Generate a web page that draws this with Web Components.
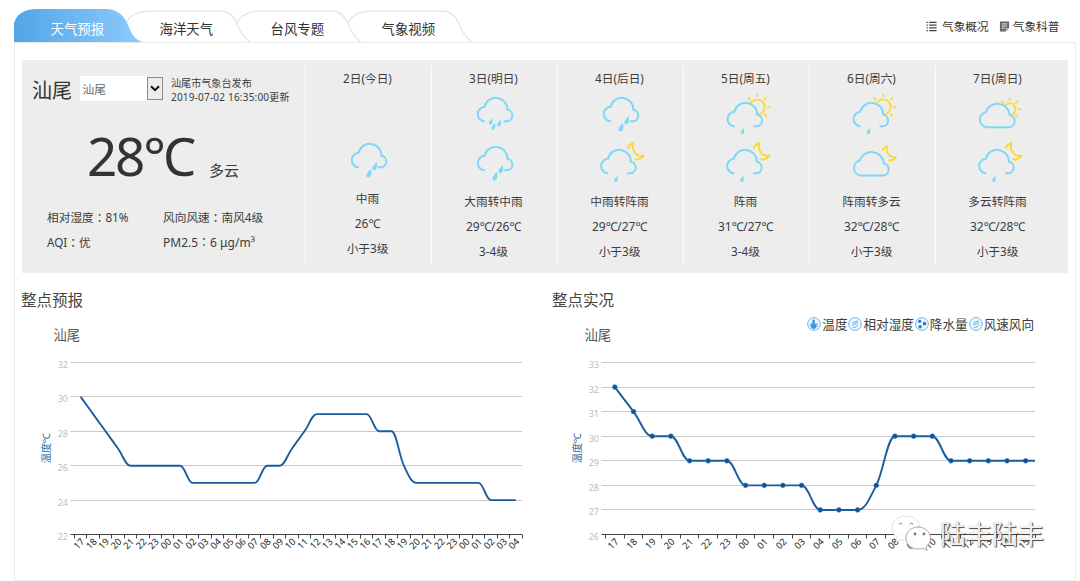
<!DOCTYPE html>
<html lang="zh-CN">
<head>
<meta charset="utf-8">
<title>天气预报</title>
<style>
  body {
    margin: 0;
    background: #fff;
    color: #3c3c3c;
    font-family: "Noto Sans", "Noto Sans CJK SC", sans-serif;
    font-size: 12px;
  }
</style>
</head>
<body>
<weather-page></weather-page>

<script>
const skyBlue = '#7fd9f6'
const sunYellow = '#fcd92b'
const lineColor = '#1b5c9e'

const cloudOpen = 'M20 31.3A7.3 7.3 0 0 1 20.5 16.8A11.6 11.6 0 0 1 43.4 19.7A5.85 5.85 0 0 1 43 31.3H40.5'
const cloudClosed = 'M19 37.2A7.7 7.7 0 0 1 18.5 22.2A12.4 12.4 0 0 1 42.6 25A6.2 6.2 0 0 1 42.2 37.2Z'

const drop = (x, y, s = 1) => `<path transform="translate(${x} ${y}) scale(${s})" fill="${skyBlue}" d="M2.2 -4C3 0 2.6 4 -.4 4C-3.4 4 -2.6 0 2.2 -4Z"/>`
const cloud = (d, transform = '') => `<path d="${d}" transform="${transform}" fill="#ededed" stroke="${skyBlue}" stroke-width="2" stroke-linecap="round"/>`
const sun = (x, y, r) => `<g transform="translate(${x} ${y})" fill="none" stroke="${sunYellow}" stroke-width="1.7" stroke-linecap="round">
  <circle r="${r}"/>
  <path d="M0 ${-r - 3}V${-r - 5}M${r + 3} 0H${r + 5}M${r * .75 + 1.8} ${-r * .75 - 1.8}l1.6 -1.6M${-r * .75 - 1.8} ${-r * .75 - 1.8}l-1.8 -2M${r * .75 + 1.8} ${r * .75 + 1.8}l1.6 1.6"/></g>`
const moon = (transform = '') => `<path transform="${transform}" fill="none" stroke="${sunYellow}" stroke-width="1.9" stroke-linejoin="round" d="M37.5 9.5Q39.5 5 43.5 4C41 11 46 18 53.7 16.8Q50.5 21.3 44.5 20.3"/>`

const weatherIcons = {
  heavy: cloud(cloudOpen) + drop(26.5, 31.5, .75) + drop(35, 33.3, .8) + drop(29.2, 36.5, .8),
  moderate: cloud(cloudOpen) + drop(36.5, 30.2) + drop(30.7, 37.2, 1.05),
  'shower-day': sun(41.3, 17, 7.5) + cloud(cloudOpen, 'translate(-2.2 5)') + drop(26.3, 41.2, .75),
  'shower-night': moon() + cloud(cloudOpen, 'translate(-2.6 3)') + drop(25.8, 40, .75),
  'cloudy-day': sun(41.7, 19.2, 5.8) + cloud(cloudClosed, 'translate(-.8 0)'),
  'cloudy-night': moon('translate(7.5 3.6) scale(.87)') + cloud(cloudClosed, 'translate(-.8 -.7)'),
}

const legendIcons = {
  temp: '<path d="M5 3.5a1.2 1.2 0 0 1 2.4 0V6a2.700 2.700 0 1 1-2.400 0Z" fill="#3c9be8"/><path d="M9.300 5.500v3.500M3.600 5.500v3" stroke="#3c9be8" stroke-width=".9"/>',
  wind: '<path d="M4 5.500L9.300 3.500M4 7.500L9.300 5.200M4.500 9.600C7 9.800 8.800 8.800 9.300 7" fill="none" stroke="#55a8ec" stroke-width=".9"/>',
  rain: '<circle cx="4.300" cy="4" r="1.500" fill="#1b7fd6"/><circle cx="8.800" cy="6.200" r="1.700" fill="#1b7fd6"/><circle cx="4.800" cy="9" r="1.600" fill="#1b7fd6"/>',
}

const linkIcons = {
  list: '<path d="M.5 1.5h1.5M.5 4.5h1.5M.5 7.5h1.5M.5 10.5h1.5M3.5 1.5h8M3.5 4.5h8M3.5 7.5h8M3.5 10.5h8" stroke="#444" stroke-width="1.1"/>',
  note: '<path d="M1 .5h10v7.5l-3.2 3.5H1Z" fill="#666"/><path d="M3 3.2h6M3 5.5h6M3 7.8h3.5" stroke="#fff" stroke-width=".9"/><path d="M8 11V8.300h2.700" stroke="#fff" fill="none" stroke-width=".8"/>',
}

const days = [
  { name: '2日(今日)', icons: ['moderate'], text: ['中雨', '26℃', '小于3级'] },
  { name: '3日(明日)', icons: ['heavy', 'moderate'], text: ['大雨转中雨', '29℃/26℃', '3-4级'] },
  { name: '4日(后日)', icons: ['moderate', 'shower-night'], text: ['中雨转阵雨', '29℃/27℃', '小于3级'] },
  { name: '5日(周五)', icons: ['shower-day', 'shower-night'], text: ['阵雨', '31℃/27℃', '3-4级'] },
  { name: '6日(周六)', icons: ['shower-day', 'cloudy-night'], text: ['阵雨转多云', '32℃/28℃', '小于3级'] },
  { name: '7日(周日)', icons: ['cloudy-day', 'shower-night'], text: ['多云转阵雨', '32℃/28℃', '小于3级'] },
]

class BaseElement extends HTMLElement {
  connectedCallback() {
    if (this.shadowRoot) return
    this.attachShadow({ mode: 'open' })
    this.shadowRoot.innerHTML = this.render()
  }
}

class TabItem extends BaseElement {
  render() {
    const active = this.hasAttribute('active')
    const shape = active
      ? `<defs><linearGradient id="g"><stop offset="0" stop-color="#52a5e8"/><stop offset="1" stop-color="#8dcbfb"/></linearGradient></defs>
         <path fill="url(#g)" d="M0 33V14C3 5 10 0 23 0H91C103 0 110 6 114 16C118 26 121 30 128 33Z"/>`
      : `<path fill="#fff" stroke="#e6e6e6" stroke-width="1.3" d="M1 14C6 5 14 2 27 2H96C104 2 109 8 112 15C116 24 119 29 125 33"/>`
    return `
    <style>
      :host { display: block; position: relative; width: 111px; height: 33px; }
      svg { position: absolute; left: 0; top: 0; overflow: visible; }
      span {
        position: relative; display: block; padding-left: ${active ? 36.5 : 34.5}px;
        font-size: 13.4px; line-height: 40px; white-space: nowrap;
        color: ${active ? '#fff' : '#333'};
      }
    </style>
    <svg width="128" height="33">${shape}</svg>
    <span><slot></slot></span>`
  }
}

class HeaderLink extends BaseElement {
  render() {
    return `
    <style>
      :host { display: flex; align-items: center; gap: 3px; font-size: 11.7px; line-height: 18px; color: #333; }
      :host([icon="list"]) { gap: 5px; }
      svg { display: block; }
    </style>
    <svg width="11" height="11" viewBox="0 0 12 12">${linkIcons[this.getAttribute('icon')]}</svg>
    <span><slot></slot></span>`
  }
}

class CitySelect extends BaseElement {
  render() {
    return `
    <style>
      :host { display: flex; width: 83px; height: 25px; background: linear-gradient(#fff, #fff) 0 0 / 68px 100% no-repeat; }
      span { flex: 1; padding-left: 2.5px; font-size: 11.7px; line-height: 26px; color: #666; }
      i { display: flex; align-items: center; justify-content: center; box-sizing: border-box; width: 16px; height: 23px; margin-top: 1px; border: 1px solid #8a8a8a; background: #ececec; }
    </style>
    <span><slot></slot></span>
    <i><svg width="10" height="7"><path d="M1 1.200L5 5.200L9 1.200" fill="none" stroke="#111" stroke-width="2"/></svg></i>`
  }
}

class CurrentWeather extends BaseElement {
  render() {
    return `
    <style>
      :host { display: block; width: 283px; }
      .top { display: flex; align-items: center; height: 25px; margin: 16px 0 0 10px; }
      h1 { margin: 0; width: 48px; font-size: 20px; line-height: 26px; font-weight: normal; padding-top: 4px; color: #333; }
      .issued { margin-left: 8px; padding-top: 4px; font-size: 10.1px; line-height: 13.5px; white-space: nowrap; }
      .time { font-size: 10px; letter-spacing: .2px; }
      .now { display: flex; align-items: baseline; margin: 25px 0 0 65px; height: 60px; }
      .temp { width: 122px; font-size: 53px; line-height: 60px; letter-spacing: -2.2px; color: #333; }
      .sky { font-size: 15px; }
      /* the traditional face centres the full-width colon */
      .info { display: grid; grid-template-columns: 116px auto; margin: 19px 0 0 25px; font-family: "Noto Sans", "Noto Sans CJK TC", sans-serif; font-size: 11.7px; line-height: 25px; }
      .num { font-size: 12px; }
    </style>
    <div class="top">
      <h1>汕尾</h1>
      <city-select>汕尾</city-select>
      <div class="issued"><div>汕尾市气象台发布</div><div class="time">2019-07-02 16:35:00更新</div></div>
    </div>
    <div class="now"><span class="temp">28℃</span><span class="sky">多云</span></div>
    <div class="info" lang="zh-TW">
      <span>相对湿度：81%</span><span>风向风速：南风4级</span>
      <span>AQI：优</span><span class="num">PM2.5：6 μg/m³</span>
    </div>`
  }
}

class WeatherIcon extends BaseElement {
  render() {
    return `
    <style>:host, svg { display: block; }</style>
    <svg width="60" height="49">${weatherIcons[this.getAttribute('type')]}</svg>`
  }
}

class DayForecast extends BaseElement {
  render() {
    const { name, icons, text } = days[this.getAttribute('day')]
    const single = icons.length === 1
    return `
    <style>
      :host { display: flex; flex-direction: column; align-items: center; box-sizing: border-box; width: 126px; height: 199px; margin-top: 5px; padding: 4px 2px 0 0; border-left: 1px solid #fbfbfb; }
      h3 { margin: 0; font-size: 11.7px; font-weight: normal; line-height: 18px; }
      .icons { display: flex; flex-direction: column; justify-content: flex-end; height: ${single ? 95 : 98}px; margin: 3px 0 ${single ? 1 : 1}px; }
      weather-icon { margin-left: 1px; }
      p { margin: 0; font-size: 11.7px; line-height: 25px; white-space: nowrap; }
      p:nth-of-type(2) { font-size: 12px; letter-spacing: -.1px; }
    </style>
    <h3>${name}</h3>
    <div class="icons">${icons.map(type => `<weather-icon type="${type}"></weather-icon>`).join('')}</div>
    ${text.map(line => `<p>${line}</p>`).join('')}`
  }
}

class LegendItem extends BaseElement {
  render() {
    return `
    <style>
      :host { display: flex; align-items: center; gap: 1px; font-size: 12.6px; line-height: 18px; }
      svg { display: block; margin-top: -3px; }
    </style>
    <svg width="14" height="14" viewBox="0 0 13 13"><circle cx="6.500" cy="6.500" r="5.900" fill="#eef7fe" stroke="#62b2f2" stroke-width=".9"/>${legendIcons[this.getAttribute('icon')]}</svg>
    <span><slot></slot></span>`
  }
}

// Smooth curve through the points, without overshooting flat stretches
const splinePath = (points) => {
  let right = points[0]
  let d = `M${points[0]}`
  for (let i = 1; i < points.length; i++) {
    const [x, y] = points[i]
    const prev = points[i - 1]
    const next = points[i + 1]
    let left = [x, y]
    let nextRight = [x, y]
    if (next) {
      let lx = (1.5 * x + prev[0]) / 2.5
      let ly = (1.5 * y + prev[1]) / 2.5
      let rx = (1.5 * x + next[0]) / 2.5
      let ry = (1.5 * y + next[1]) / 2.5
      const correction = (ry - ly) * (rx - x) / (rx - lx) + y - ry
      ly += correction
      ry += correction
      if (ly > prev[1] && ly > y) {
        ly = Math.max(prev[1], y)
        ry = 2 * y - ly
      } else if (ly < prev[1] && ly < y) {
        ly = Math.min(prev[1], y)
        ry = 2 * y - ly
      }
      if (ry > next[1] && ry > y) {
        ry = Math.max(next[1], y)
        ly = 2 * y - ry
      } else if (ry < next[1] && ry < y) {
        ry = Math.min(next[1], y)
        ly = 2 * y - ry
      }
      left = [lx, ly]
      nextRight = [rx, ry]
    }
    d += `C${right} ${left} ${x},${y}`
    right = nextRight
  }
  return d
}

class LineChart extends BaseElement {
  render() {
    const num = (name) => Number(this.getAttribute(name))
    const values = this.getAttribute('values').split(' ').map(Number)
    const [min, max, step, count, width] = ['min', 'max', 'step', 'count', 'width'].map(num)
    const left = 59.5
    const top = 12.5
    const height = 172
    const pitch = width / count
    const yOf = (value) => top + (max - value) * height / (max - min)
    const points = values.map((value, i) => [left + (i + .5) * pitch, yOf(value)])

    let grid = ''
    for (let v = min; v <= max; v += step) {
      const y = Math.round(yOf(v) - .5) + .5
      if (v > min) grid += `<path d="M${left - 4} ${y}H${left + width}" stroke="#c9c9c9"/>`
      grid += `<text x="53" y="${y + 5}" text-anchor="end" font-size="9" fill="#bdbdbd">${v}</text>`
    }

    let ticks = ''
    for (let i = 0; i <= count; i++) {
      const x = Math.round(left + i * pitch - .5) + .5
      ticks += `M${x} ${top + height}v4`
    }

    const labels = Array.from({ length: count }, (_, i) => {
      const hour = String((17 + i) % 24).padStart(2, '0')
      return `<text transform="translate(${left + (i + .5) * pitch - 1.8} ${top + height + 9.2}) rotate(-45)" y="3.3" text-anchor="middle" font-size="9.3" fill="#222">${hour}</text>`
    }).join('')

    const dots = this.hasAttribute('dots')
      ? points.slice(0, count).map(([x, y]) => `<circle cx="${x}" cy="${y}" r="2.4" fill="#14508f" stroke="#2f7fc4" stroke-width=".6"/>`).join('')
      : ''

    return `
    <style>:host, svg { display: block; } svg { overflow: visible; }</style>
    <svg width="520" height="212">
      <clipPath id="plot"><rect x="${left}" y="0" width="${width}" height="200"/></clipPath>
      ${grid}
      <path d="M${left - 4} ${top + height}H${left + width}${ticks}" stroke="#444" fill="none"/>
      ${labels}
      <text transform="translate(31 98) rotate(-90)" y="4" text-anchor="middle" font-size="10.2" fill="#2f6aa8">温度℃</text>
      <path d="${splinePath(points)}" clip-path="url(#plot)" fill="none" stroke="${lineColor}" stroke-width="1.9"/>
      ${dots}
    </svg>`
  }
}

class ChartPanel extends BaseElement {
  render() {
    return `
    <style>
      :host { display: block; flex: none; width: 531px; }
      h2 { margin: 0 0 0 6px; font-size: 15.5px; line-height: 24px; font-weight: normal; color: #444; }
      .bar { display: flex; justify-content: space-between; align-items: flex-start; height: 38px; padding: 0 43px 0 38.5px; }
      .city { padding-top: 13px; font-size: 13.3px; line-height: 20px; color: #555; }
      .legend { display: flex; gap: 1px; padding-top: 4px; }
    </style>
    <h2>${this.getAttribute('heading')}</h2>
    <div class="bar"><div class="city">汕尾</div><div class="legend"><slot name="legend"></slot></div></div>
    <slot></slot>`
  }
}

class WaterMark extends BaseElement {
  render() {
    return `
    <style>
      :host { display: flex; align-items: center; gap: 9px; }
      svg { display: block; }
      span { font-size: 26px; line-height: 34px; color: rgba(255, 255, 255, .93); text-shadow: 1px 1px 1px #444, 0 0 1px #999; white-space: nowrap; }
    </style>
    <svg width="40" height="37">
      <g stroke-linecap="round">
        <path d="M15 1C7 1 1 6 1 13C1 17 3 20 6.5 22L5 27L11 24.5C12 25 14 25 16 25C24 25 29 19 29 13C29 6 23 1 15 1Z" fill="#fff" fill-opacity=".95" stroke="#e2e2e2"/>
        <path d="M27 12C20 12 15 17 15 23C15 29 20 34 27 34C29 34 31 34 32 33L36 35.5L35 31.5C38 29.5 39.5 27 39.5 23C39.5 17 34 12 27 12Z" fill="#fff" fill-opacity=".95" stroke="#aaa"/>
        <path d="M8 9q1.500 -2 3 0M19 9q1.500 -2 3 0" fill="none" stroke="#777"/>
        <circle cx="24" cy="19" r="1.400" fill="#777"/><circle cx="33" cy="19" r="1.400" fill="#777"/>
      </g>
    </svg>
    <span><slot></slot></span>`
  }
}

class WeatherPage extends BaseElement {
  render() {
    return `
    <style>
      :host { display: block; position: relative; box-sizing: border-box; width: 1080px; height: 581px; padding: 9px 4px 0 14px; overflow: hidden; }
      header { display: flex; height: 33px; }
      nav { display: flex; }
      tab-item:nth-child(1) { z-index: 4; }
      tab-item:nth-child(2) { z-index: 3; }
      tab-item:nth-child(3) { z-index: 2; }
      .links { display: flex; gap: 10px; margin-left: auto; padding: 8px 16.5px 0 0; align-self: flex-start; }
      main { box-sizing: border-box; height: 539px; border: 1px solid #ebebeb; padding: 17px 7px 0; }
      .board { display: flex; height: 213px; background: #ededed; }
      .charts { display: flex; margin: 15px -7px 0; }
      water-mark { position: absolute; left: 891px; top: 515px; }
    </style>
    <header>
      <nav>
        <tab-item active>天气预报</tab-item>
        <tab-item>海洋天气</tab-item>
        <tab-item>台风专题</tab-item>
        <tab-item>气象视频</tab-item>
      </nav>
      <div class="links">
        <header-link icon="list">气象概况</header-link>
        <header-link icon="note">气象科普</header-link>
      </div>
    </header>
    <main>
      <div class="board">
        <current-weather></current-weather>
        ${days.map((_, i) => `<day-forecast day="${i}"></day-forecast>`).join('')}
      </div>
      <div class="charts">
        <chart-panel heading="整点预报">
          <line-chart min="22" max="32" step="2" count="36" width="447.5"
            values="30 29 28 27 26 26 26 26 26 25 25 25 25 25 25 26 26 27 28 29 29 29 29 29 28 28 26 25 25 25 25 25 25 24 24 24"></line-chart>
        </chart-panel>
        <chart-panel heading="整点实况">
          <legend-item slot="legend" icon="temp">温度</legend-item>
          <legend-item slot="legend" icon="wind">相对湿度</legend-item>
          <legend-item slot="legend" icon="rain">降水量</legend-item>
          <legend-item slot="legend" icon="wind">风速风向</legend-item>
          <line-chart dots min="26" max="33" step="1" count="23" width="429.5"
            values="32 31 30 30 29 29 29 28 28 28 28 27 27 27 28 30 30 30 29 29 29 29 29 29"></line-chart>
        </chart-panel>
      </div>
    </main>
    <water-mark>陆丰陆丰</water-mark>`
  }
}

window.customElements.define('tab-item', TabItem)
window.customElements.define('header-link', HeaderLink)
window.customElements.define('city-select', CitySelect)
window.customElements.define('current-weather', CurrentWeather)
window.customElements.define('weather-icon', WeatherIcon)
window.customElements.define('day-forecast', DayForecast)
window.customElements.define('legend-item', LegendItem)
window.customElements.define('line-chart', LineChart)
window.customElements.define('chart-panel', ChartPanel)
window.customElements.define('water-mark', WaterMark)
window.customElements.define('weather-page', WeatherPage)
</script>
</body>
</html>
